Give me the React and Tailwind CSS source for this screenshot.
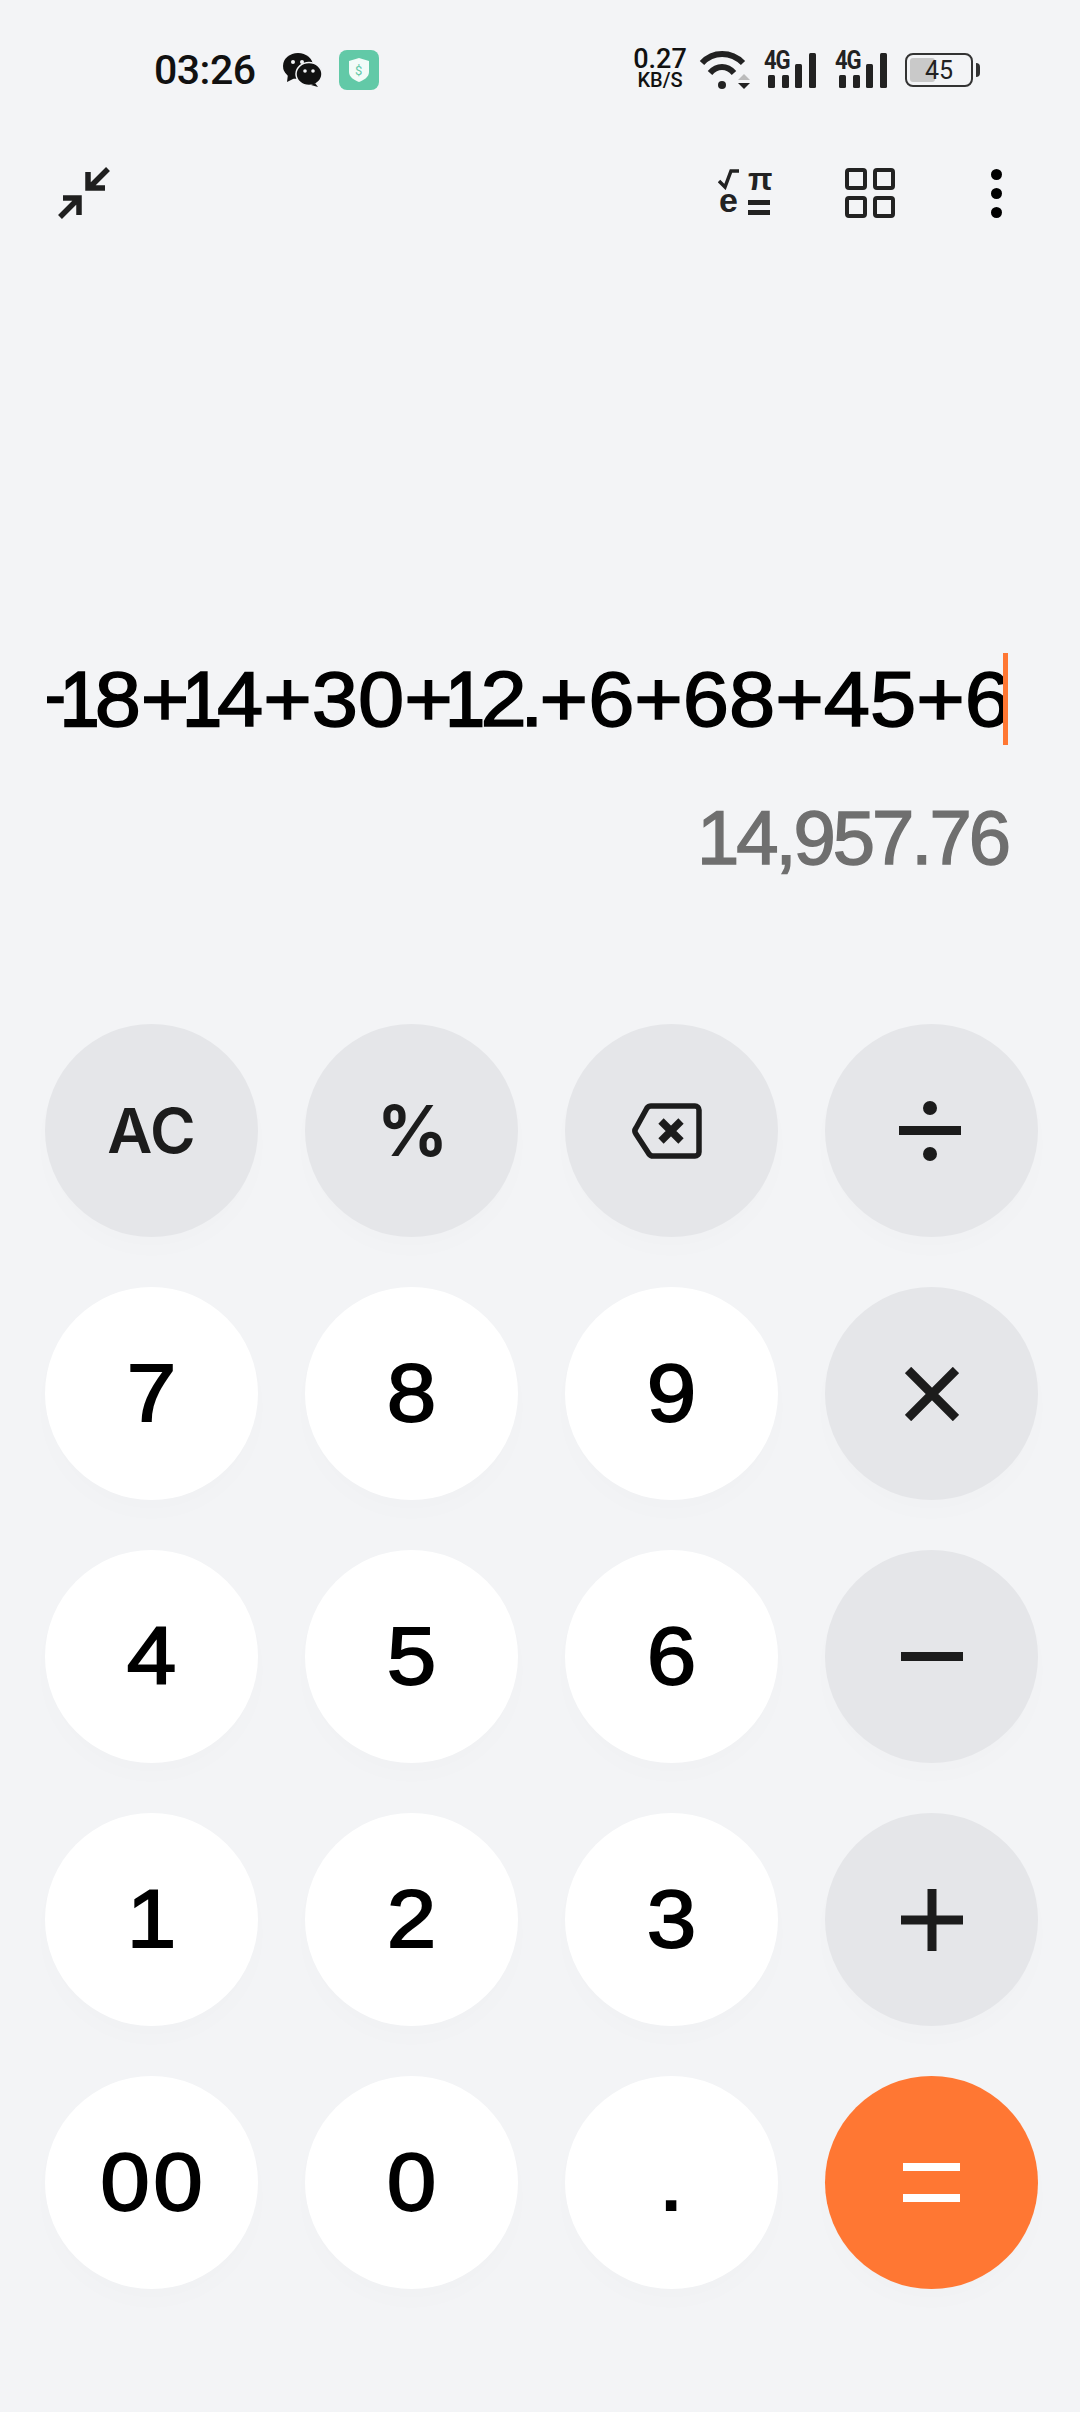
import React from 'react';

const KEYS = [
  { label: 'AC', kind: 'fn', cls: "text-[62px] font-semibold font-['Inter',sans-serif]" },
  { label: '%', kind: 'fn', cls: "text-[70px] font-bold tracking-[-2px] font-['Inter',sans-serif]" },
  { icon: 'back', kind: 'fn' },
  { icon: 'div', kind: 'fn' },
  { label: '7' },
  { label: '8' },
  { label: '9' },
  { icon: 'times', kind: 'fn' },
  { label: '4' },
  { label: '5' },
  { label: '6' },
  { icon: 'minus', kind: 'fn' },
  { label: '1' },
  { label: '2' },
  { label: '3' },
  { icon: 'plus', kind: 'fn' },
  { label: '00' },
  { label: '0' },
  { label: '.' },
  { icon: 'equals', kind: 'eq' },
];

const KeyIcon = ({ name }) => {
  if (name === 'back') {
    return (
      <svg width="70" height="56" viewBox="0 0 70 56" fill="none" stroke="#1c1c1c" className="-ml-[9px]">
        <path d="M19 3H63a4 4 0 0 1 4 4V49a4 4 0 0 1-4 4H21a5 5 0 0 1-4-2L4 31a5 5 0 0 1 0-6L15 5a5 5 0 0 1 4-2Z" strokeWidth="5.500" strokeLinejoin="round" />
        <path d="M29 18 49 38M49 18 29 38" strokeWidth="7.500" />
      </svg>
    );
  }
  if (name === 'div') {
    return (
      <svg width="62" height="62" viewBox="0 0 62 62" fill="#1c1c1c" className="-ml-[3px]">
        <circle cx="31" cy="8" r="7" />
        <rect x="0" y="26" width="62" height="9" />
        <circle cx="31" cy="54" r="7" />
      </svg>
    );
  }
  if (name === 'times') {
    return (
      <svg width="54" height="54" viewBox="0 0 54 54" stroke="#1c1c1c" strokeWidth="9">
        <path d="M3 3 51 51M51 3 3 51" />
      </svg>
    );
  }
  if (name === 'minus') {
    return (
      <svg width="62" height="9" viewBox="0 0 62 9" fill="#1c1c1c">
        <rect width="62" height="9" />
      </svg>
    );
  }
  if (name === 'plus') {
    return (
      <svg width="62" height="62" viewBox="0 0 62 62" fill="#1c1c1c">
        <rect y="26.500" width="62" height="9" />
        <rect x="26.500" width="9" height="62" />
      </svg>
    );
  }
  return (
    <svg width="57" height="39" viewBox="0 0 57 39" fill="#ffffff">
      <rect width="57" height="8" />
      <rect y="31" width="57" height="8" />
    </svg>
  );
};

const Key = ({ item }) => {
  const bg = item.kind === 'fn' ? 'bg-[#e5e6e9] text-[#1c1c1c]' : item.kind === 'eq' ? 'bg-[#ff7733]' : 'bg-white text-black';
  return (
    <button className={`w-[213px] h-[213px] rounded-full flex items-center justify-center leading-none shadow-[0_14px_24px_rgba(0,0,0,0.012)] ${bg} ${item.cls || ''}`}>
      {item.icon ? (
        <KeyIcon name={item.icon} />
      ) : item.cls ? (
        item.label
      ) : (
        <span className="pl-[3px] text-[81px] scale-x-110 tracking-[3px] font-['Liberation_Sans',sans-serif] [-webkit-text-stroke:1.800px_#000]">{item.label}</span>
      )}
    </button>
  );
};

const Signal = () => (
  <div className="relative w-[52px] h-[36px]">
    <span className="absolute left-0 top-[-4px] text-[26px] leading-[24px] font-bold tracking-[-1.500px] text-[#222] scale-x-[0.85] origin-left font-['Roboto',sans-serif]">4G</span>
    <svg width="52" height="36" viewBox="0 0 52 36" fill="#222" className="absolute left-0 top-0">
      <rect x="4" y="23" width="7" height="13" rx="1.500" />
      <rect x="18" y="23" width="7" height="13" rx="1.500" />
      <rect x="31" y="12" width="7" height="24" rx="1.500" />
      <rect x="45" y="1" width="7" height="35" rx="1.500" />
    </svg>
  </div>
);

const StatusBar = () => (
  <div className="h-[140px] pl-[154px] pr-[100px] flex items-center justify-between font-['Roboto',sans-serif]">
    <div className="flex items-center">
      <span className="text-[41px] leading-none font-medium tracking-[-0.500px] text-[#111]">03:26</span>
      <svg width="40" height="34" viewBox="0 0 40 34" className="ml-[26px]">
        <ellipse cx="16" cy="13" rx="15" ry="13" fill="#111" />
        <path d="M6 21 5 29 13 25Z" fill="#111" />
        <ellipse cx="27" cy="21" rx="13" ry="11.500" fill="#111" stroke="#f3f4f6" strokeWidth="1.500" />
        <path d="M33 30 36 34 29 32Z" fill="#111" />
        <circle cx="11" cy="9" r="2" fill="#f3f4f6" />
        <circle cx="20" cy="9" r="2" fill="#f3f4f6" />
        <circle cx="23" cy="18" r="1.800" fill="#f3f4f6" />
        <circle cx="31" cy="18" r="1.800" fill="#f3f4f6" />
      </svg>
      <div className="ml-[17px] w-[40px] h-[40px] rounded-[8px] bg-[#62c9a7] relative flex items-center justify-center">
        <svg width="20" height="24" viewBox="0 0 20 24">
          <path d="M10 0 20 3V14C20 19 15 22 10 24 5 22 0 19 0 14V3Z" fill="#f2fbf8" />
        </svg>
        <span className="absolute inset-0 flex items-center justify-center text-[13px] leading-none text-[#62c9a7]">$</span>
      </div>
    </div>
    <div className="flex items-center">
      <div className="w-[56px] flex flex-col items-center text-[#111] leading-none">
        <span className="text-[27px] leading-[21px] font-medium">0.27</span>
        <span className="text-[20px] leading-[21px] font-medium">KB/S</span>
      </div>
      <svg width="52" height="40" viewBox="0 0 52 40" fill="none" stroke="#222" className="ml-[11px]">
        <path d="M3 13C14 1 32 1 44 13" strokeWidth="6" />
        <path d="M11 23C18 15 28 15 35 23" strokeWidth="6" />
        <circle cx="23" cy="35" r="4" fill="#222" stroke="none" />
        <path d="M39 30 45 24 51 30Z" fill="#bbb" stroke="none" />
        <path d="M39 33 51 33 45 39Z" fill="#222" stroke="none" />
      </svg>
      <div className="ml-[13px]"><Signal /></div>
      <div className="ml-[19px]"><Signal /></div>
      <div className="ml-[18px] flex items-center">
        <div className="relative w-[68px] h-[34px] rounded-[8px] border-[2.500px] border-[#333] p-[3px]">
          <div className="w-[25px] h-full rounded-[3px] bg-[#c9c9c9]" />
          <span className="absolute inset-0 flex items-center justify-center text-[25px] leading-none text-[#222]">45</span>
        </div>
        <div className="ml-[3px] w-[4px] h-[14px] rounded-r bg-[#333]" />
      </div>
    </div>
  </div>
);

const ToolBar = () => (
  <div className="h-[106px] pl-[58px] pr-[78px] flex items-center justify-between">
    <svg width="52" height="52" viewBox="0 0 52 52" fill="none" stroke="#1f1f1f" strokeWidth="5.500">
      <path d="M2 50 21 31M5 31H21V48" />
      <path d="M50 2 32 20M30 5V21H47" />
    </svg>
    <div className="flex items-center">
      <div className="relative w-[52px] h-[48px] text-[#222] font-['Liberation_Sans',sans-serif] font-bold">
        <svg width="22" height="21" viewBox="0 0 22 21" fill="none" stroke="#222" strokeWidth="3.500" className="absolute left-0 top-0">
          <path d="M1 12 7 18 13 2H21" />
        </svg>
        <span className="absolute left-[30px] top-[-7px] text-[32px] leading-[34px]">π</span>
        <span className="absolute left-[1px] top-[13px] text-[34px] leading-[36px]">e</span>
        <div className="absolute left-[30px] top-[31px] w-[22px] h-[5px] bg-[#222]" />
        <div className="absolute left-[30px] top-[41px] w-[22px] h-[5px] bg-[#222]" />
      </div>
      <div className="ml-[75px] grid grid-cols-2 gap-[6px]">
        <div className="w-[22px] h-[22px] border-[4.500px] border-[#222] rounded-[4px]" />
        <div className="w-[22px] h-[22px] border-[4.500px] border-[#222] rounded-[4px]" />
        <div className="w-[22px] h-[22px] border-[4.500px] border-[#222] rounded-[4px]" />
        <div className="w-[22px] h-[22px] border-[4.500px] border-[#222] rounded-[4px]" />
      </div>
      <div className="ml-[96px] flex flex-col gap-[8px]">
        <div className="w-[11px] h-[11px] rounded-full bg-black" />
        <div className="w-[11px] h-[11px] rounded-full bg-black" />
        <div className="w-[11px] h-[11px] rounded-full bg-black" />
      </div>
    </div>
  </div>
);

// the 1 and the dot sit much tighter than Liberation's fixed digit width
const Expression = ({ text }) => (
  <span className="whitespace-nowrap text-[78px] leading-none text-black shrink-0 scale-x-[1.065] translate-x-[3px] origin-right font-['Liberation_Sans',sans-serif] [-webkit-text-stroke:1.500px_#000]">
    {text.split('').map((ch, i) => {
      if (ch === '1') return <span key={i} className="inline-block w-[26px] -ml-[7px] mr-[7px] scale-x-[0.85] origin-left [-webkit-text-stroke:2.500px_#000]">1</span>;
      if (ch === '.') return <span key={i} className="-ml-[6px] -mr-[3.500px]">.</span>;
      return ch;
    })}
  </span>
);

export default function App() {
  return (
    <div className="w-[1080px] h-[2412px] bg-[#f3f4f6] overflow-hidden font-['Inter',sans-serif]">
      <StatusBar />
      <ToolBar />
      {/* expression and running result */}
      <div className="pt-[407px] pl-[47px] pr-[72px]">
        <div className="relative h-[92px] flex items-center justify-end overflow-hidden">
          <Expression text="+18+14+30+12.+6+68+45+6" />
          <div className="absolute right-0 top-0 w-[5px] h-full bg-[#ff7733]" />
        </div>
        <div className="mt-[47px] text-right text-[76px] leading-[92px] text-[#6f6f6f] tracking-[-3px] font-['Liberation_Sans',sans-serif] [-webkit-text-stroke:1.500px_#6f6f6f]">14,957.76</div>
      </div>
      {/* keypad */}
      <div className="mt-[140px] pl-[45px] grid grid-cols-[repeat(4,213px)] gap-x-[47px] gap-y-[50px]">
        {KEYS.map((item, i) => (
          <Key key={i} item={item} />
        ))}
      </div>
    </div>
  );
}
